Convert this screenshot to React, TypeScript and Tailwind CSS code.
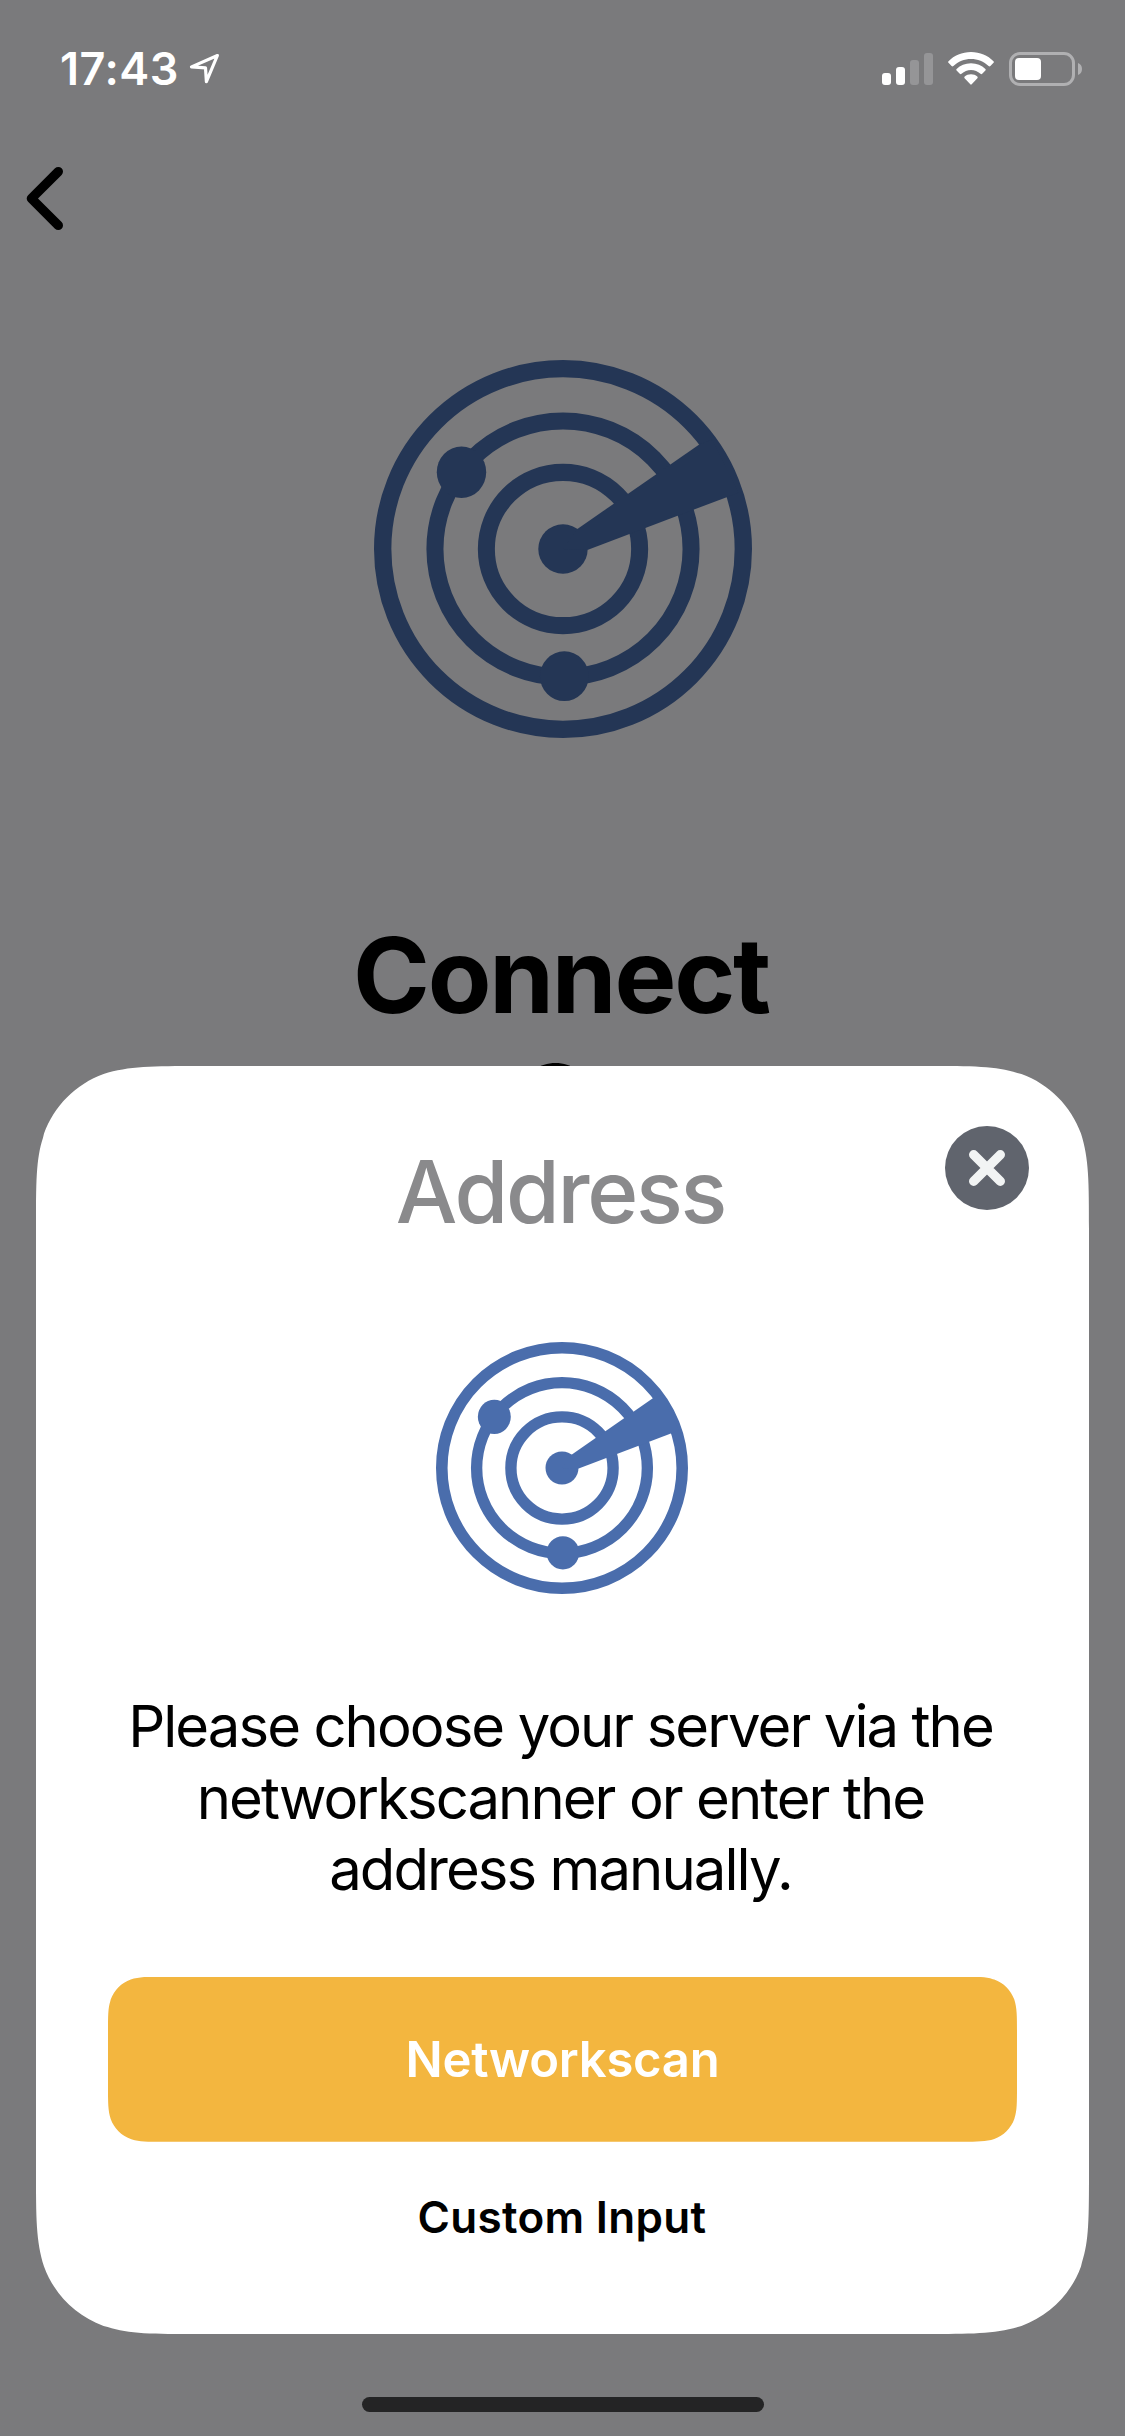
import React from "react";

/** Outline of a rectangle with iOS-style continuous corners. */
function continuousRect(w: number, h: number, r: number) {
  const a = 1.52866 * r, b = 1.08849 * r, c = 0.86841 * r;
  const d = 0.66993 * r, e = 0.0655 * r, f = 0.63149 * r, g = 0.07491 * r;
  const i = 0.37282 * r, j = 0.16906 * r;
  return [
    `M${a} 0H${w - a}`,
    `C${w - b} 0 ${w - c} 0 ${w - d} ${e}L${w - f} ${g}`,
    `C${w - i} ${j} ${w - j} ${i} ${w - g} ${f}`,
    `C${w} ${c} ${w} ${b} ${w} ${a}V${h - a}`,
    `C${w} ${h - b} ${w} ${h - c} ${w - e} ${h - d}L${w - g} ${h - f}`,
    `C${w - j} ${h - i} ${w - i} ${h - j} ${w - f} ${h - g}`,
    `C${w - c} ${h} ${w - b} ${h} ${w - a} ${h}H${a}`,
    `C${b} ${h} ${c} ${h} ${d} ${h - e}L${f} ${h - g}`,
    `C${i} ${h - j} ${j} ${h - i} ${g} ${h - f}`,
    `C0 ${h - c} 0 ${h - b} 0 ${h - a}V${a}`,
    `C0 ${b} 0 ${c} ${e} ${d}L${g} ${f}`,
    `C${j} ${i} ${i} ${j} ${f} ${g}`,
    `C${c} 0 ${b} 0 ${a} 0Z`,
  ].join("");
}

function Radar({ className }: { className: string }) {
  return (
    <svg viewBox="73 61 1132 1132" className={className} fill="none" stroke="currentColor">
      <circle cx="639" cy="627" r="540" strokeWidth="52" />
      <circle cx="639" cy="627" r="383.5" strokeWidth="51" />
      <circle cx="639" cy="627" r="229.5" strokeWidth="51" />
      <g fill="currentColor" stroke="none">
        <circle cx="639" cy="627" r="74" />
        <ellipse cx="335" cy="397" rx="74" ry="77" />
        <ellipse cx="643" cy="1008" rx="73" ry="74.5" />
        <path d="M639 627L682 567L1047 314L1085 300L1165 458L1131 471L714 629Z" />
      </g>
    </svg>
  );
}

function StatusBar() {
  return (
    <header className="flex h-[138px] items-start pt-[52px] pl-[60px] pr-[43px] text-white">
      <span className="-mt-[1px] w-[120px] whitespace-nowrap text-[45px] leading-[36px] font-semibold tracking-[0.5px]">17:43</span>
      <svg className="ml-[8px] h-[34px] w-[34px]" viewBox="188 52 34 34" fill="none" stroke="currentColor" strokeWidth="3.2" strokeLinejoin="round">
        <path d="M217.400 55.500L191.500 66.900L205.500 67.800L206.400 81.700Z" />
      </svg>
      <div className="ml-auto flex h-[34px] items-start">
        <div className="flex h-[33px] items-end gap-[5px]">
          <i className="h-[12px] w-[9px] rounded-[3px] bg-white" />
          <i className="h-[18px] w-[9px] rounded-[3px] bg-white" />
          <i className="h-[25px] w-[9px] rounded-[3px] bg-[#959597]" />
          <i className="h-[32px] w-[9px] rounded-[3px] bg-[#959597]" />
        </div>
        <svg className="ml-[15px] h-[34px] w-[46px]" viewBox="0 0 46 34" fill="currentColor">
          <path d="M23 0C32 0 39.800 3.500 45.500 9.200Q46.300 10 45.500 10.800L42.400 14Q41.500 14.800 40.600 14C35.800 9.400 29.700 6.900 23 6.900S10.200 9.400 5.400 14Q4.500 14.800 3.600 14L.5 10.800Q-.3 10 .5 9.200C6.200 3.500 14 0 23 0Z" />
          <path d="M23 11.200C28.800 11.200 33.700 13.300 37.400 17Q38.200 17.800 37.400 18.600L34.200 21.800Q33.400 22.600 32.500 21.800C29.700 19.300 26.700 18 23 18S16.300 19.300 13.500 21.800Q12.600 22.600 11.800 21.800L8.600 18.600Q7.800 17.800 8.600 17C12.300 13.300 17.200 11.200 23 11.200Z" />
          <path d="M23 22.300C25.600 22.300 27.600 23.100 29.300 24.500Q30.200 25.300 29.400 26.200L23.700 32.300Q23 33.100 22.300 32.300L16.600 26.200Q15.800 25.300 16.700 24.500C18.400 23.100 20.400 22.300 23 22.300Z" />
        </svg>
        <div className="ml-[15px] flex h-[34px] w-[66px] items-center rounded-[11px] border-[3px] border-[#b0b0b2] pl-[3px]">
          <i className="h-[22px] w-[26px] rounded-[4px] bg-white" />
        </div>
        <svg className="mt-[11px] ml-[3px] h-[12px] w-[4px]" viewBox="0 0 4 12" fill="#b0b0b2">
          <path d="M0 0Q4 1.600 4 6T0 12Z" />
        </svg>
      </div>
    </header>
  );
}

function AddressSheet() {
  return (
    <section
      className="relative flex h-[1268px] w-[1053px] shrink-0 flex-col items-center bg-white"
      style={{ clipPath: `path("${continuousRect(1053, 1268, 107)}")` }}
    >
      <button aria-label="Close" className="absolute top-[60px] right-[60px] size-[84px] rounded-full bg-[#60646d]">
        <svg viewBox="0 0 84 84" className="size-[84px]" stroke="#f2f4f4" strokeWidth="9.400" strokeLinecap="round">
          <path d="M28.700 28.700L55.300 55.300M55.300 28.700L28.700 55.300" />
        </svg>
      </button>
      <h2 className="mt-[74px] pr-[4px] text-[87px] leading-[104px] font-medium tracking-[-2.300px] text-[#8a8a8c]">Address</h2>
      <Radar className="mt-[98px] mr-[1px] size-[252px] text-[#4a6dac]" />
      <p className="mt-[97px] pr-[4px] text-center text-[58px] leading-[71.6px] tracking-[-1.930px] text-black">
        Please choose your server via the
        <br />
        networkscanner or enter the
        <br />
        address manually.
      </p>
      <button
        className="mt-[71px] h-[165px] w-[909px] bg-[#f3b63f] pt-[2px] text-[49px] leading-[60px] font-semibold tracking-[-0.250px] text-white"
        style={{ clipPath: `path("${continuousRect(909, 165, 36)}")` }}
      >
        Networkscan
      </button>
      <button className="mt-[45px] pr-[1px] text-[44px] leading-[60px] font-semibold tracking-[0.300px] text-black">Custom Input</button>
    </section>
  );
}

export default function App() {
  return (
    <div className="flex h-[2436px] w-[1125px] flex-col overflow-hidden bg-[#7a7a7c] font-['Inter',sans-serif]">
      <StatusBar />
      <nav className="h-[222px] pt-[26px] pl-[22px]">
        <svg className="h-[70px] w-[46px]" viewBox="22 164 46 70" fill="none" stroke="#000" strokeWidth="9.400" strokeLinecap="round" strokeLinejoin="round">
          <path d="M58.300 171.600L31.400 198.500L58.300 225.400" />
        </svg>
      </nav>
      <main className="flex h-[706px] shrink-0 flex-col items-center overflow-hidden">
        <Radar className="size-[378px] shrink-0 text-[#243655]" />
        <h1 className="mt-[174px] pr-[3px] text-center text-[104px] leading-[127px] font-bold tracking-[-2.200px] text-black">
          Connect
          <br />
          your Server
        </h1>
      </main>
      <div className="flex h-[1370px] shrink-0 flex-col items-center">
        <AddressSheet />
        <div className="mt-[63px] h-[15px] w-[402px] shrink-0 rounded-full bg-[#242425]" />
      </div>
    </div>
  );
}
